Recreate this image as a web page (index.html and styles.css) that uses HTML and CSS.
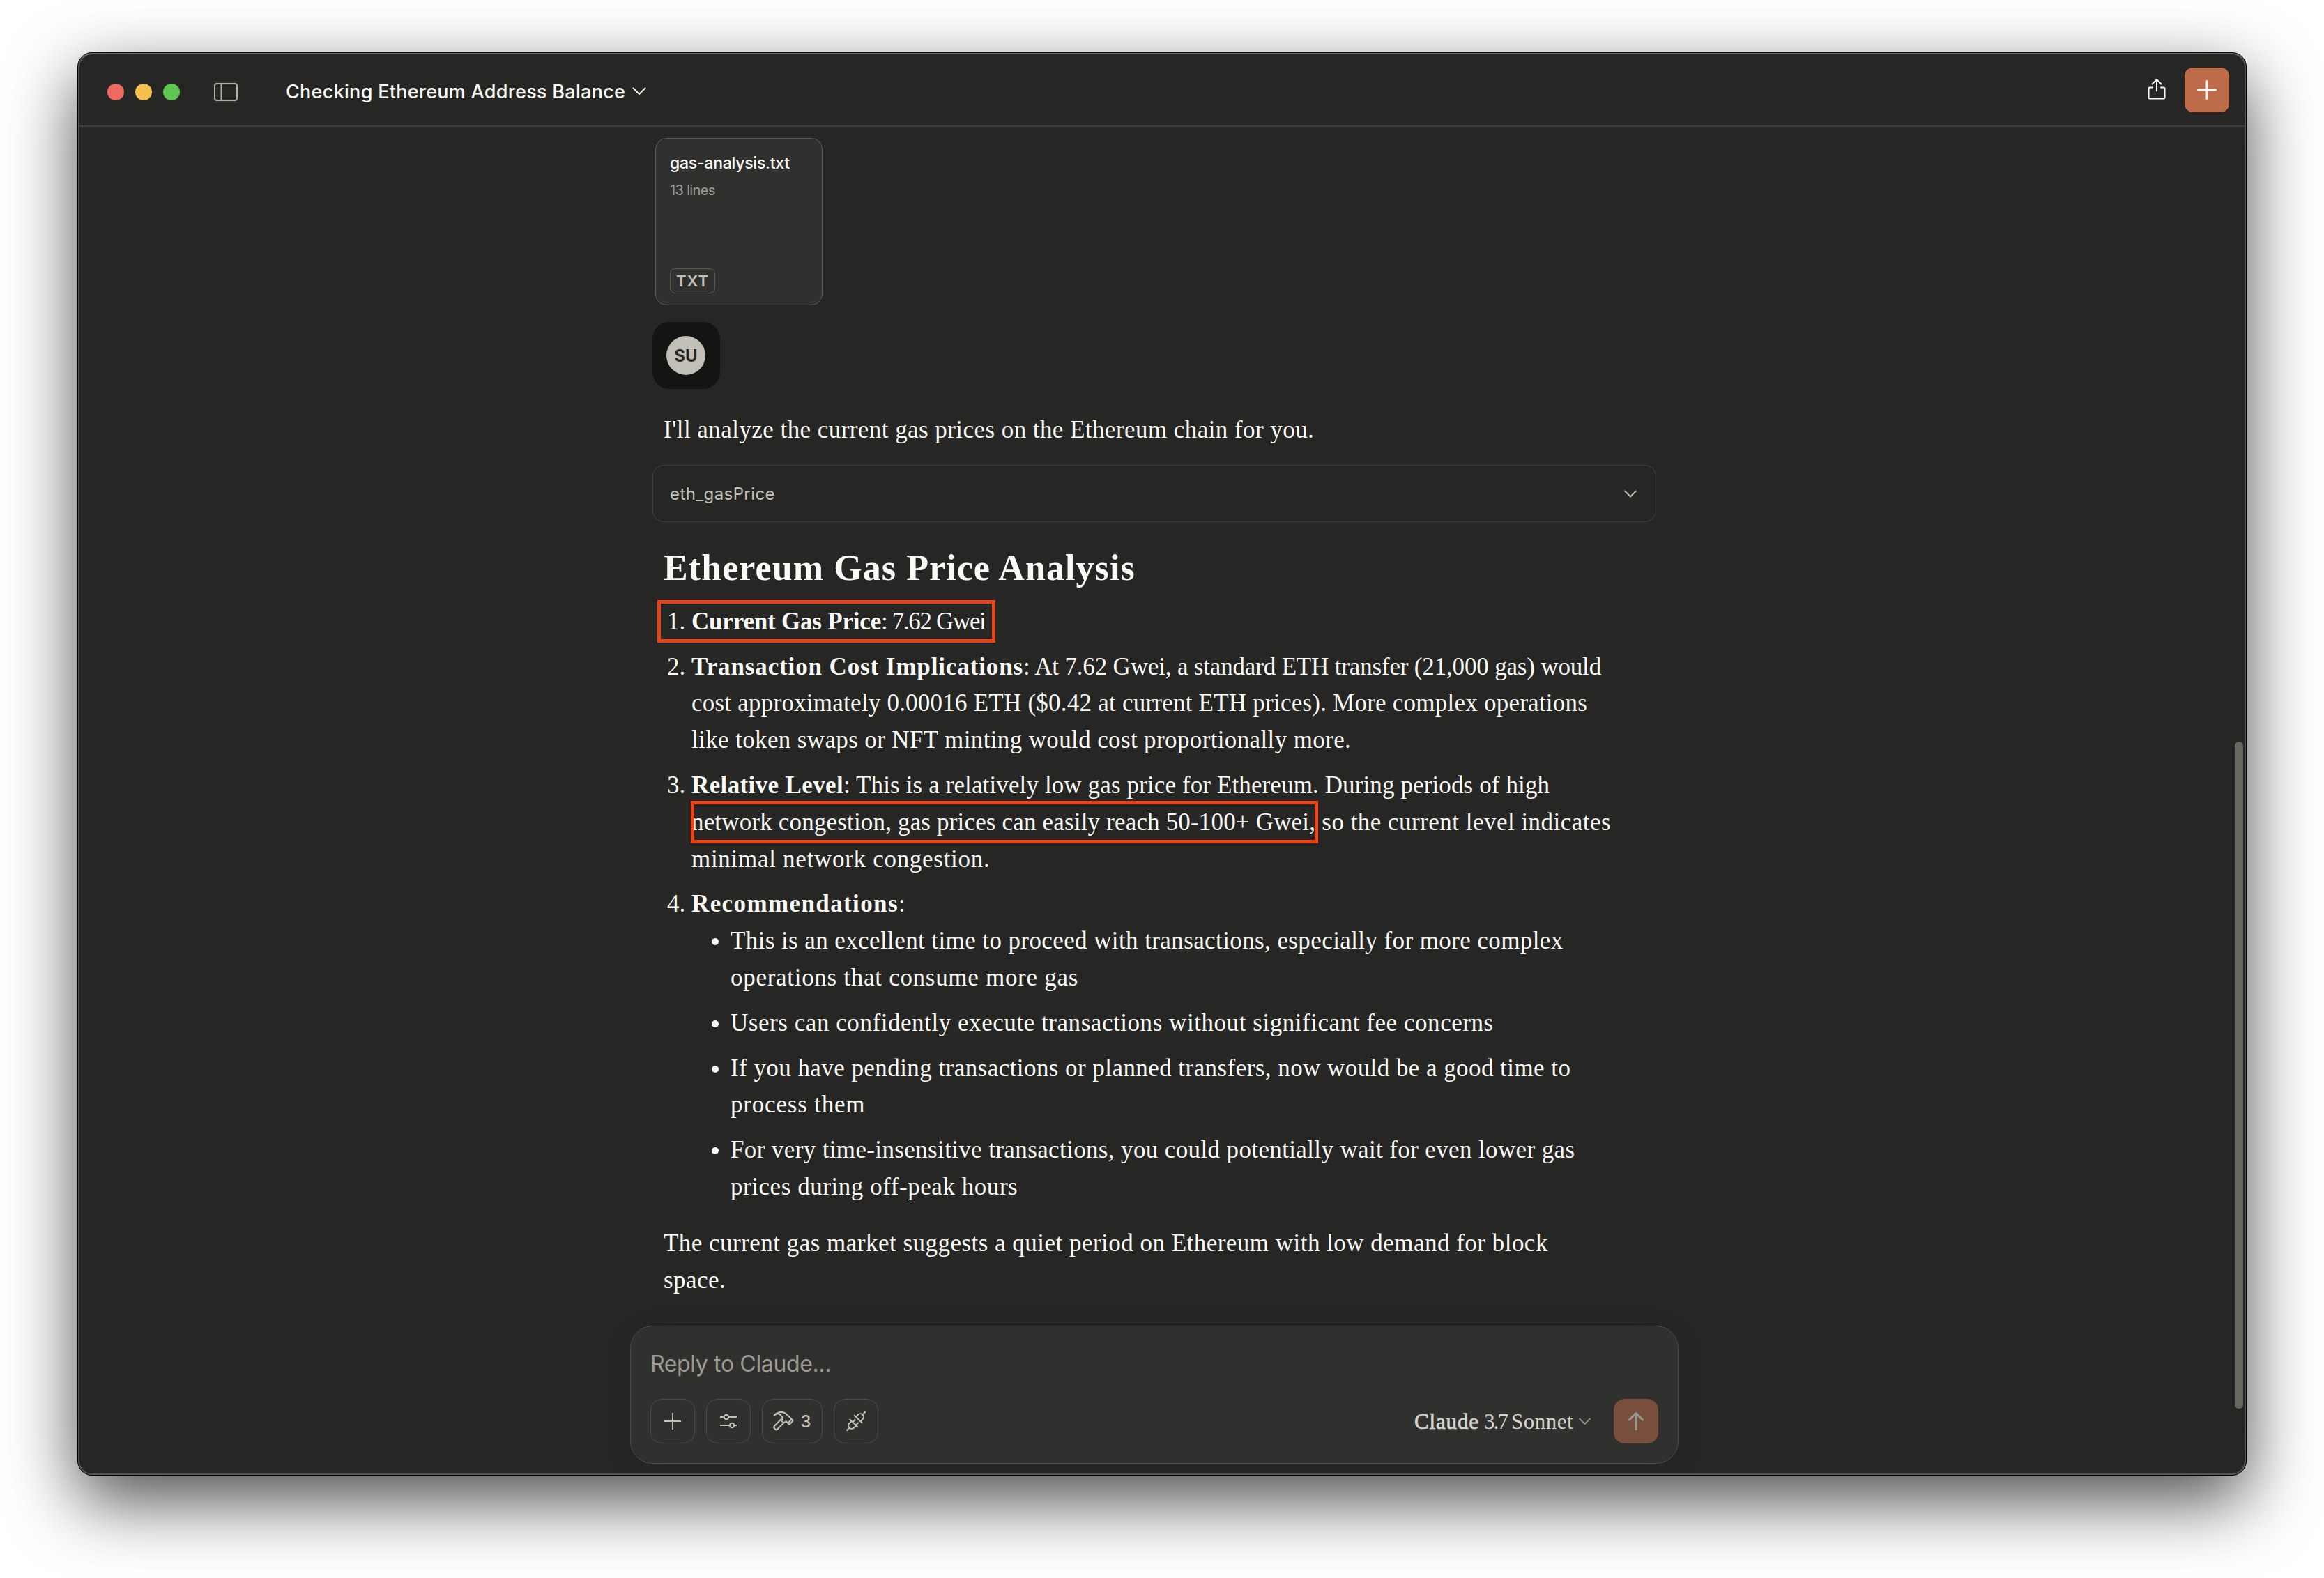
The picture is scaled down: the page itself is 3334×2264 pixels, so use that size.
FILE: index.html
```html
<!DOCTYPE html>
<html lang="en">
<head>
<meta charset="utf-8">
<title>Checking Ethereum Address Balance</title>
<link rel="stylesheet" href="styles.css">
</head>
<body>
<div class="window">
  <header class="titlebar">
    <div class="lights"><i class="red"></i><i class="yellow"></i><i class="green"></i></div>
    <svg class="icon sidebar-icon" width="34" height="28" viewBox="0 0 34 28"><rect x="1" y="2" width="32" height="24" rx="3"/><path d="M10.500 2v24"/></svg>
    <h1 class="title">Checking Ethereum Address Balance</h1>
    <svg class="icon title-chevron" width="20" height="12" viewBox="0 0 20 12"><path d="M1.500 1.500 10 10l8.500-8.500"/></svg>
    <div class="actions">
      <svg class="icon share-icon" width="26" height="32" viewBox="0 0 26 32"><path d="M7 13.500H3a1.500 1.500 0 0 0-1.500 1.500v13A1.500 1.500 0 0 0 3 29.500h20a1.500 1.500 0 0 0 1.500-1.500V15a1.500 1.500 0 0 0-1.500-1.500h-4M13 18.500V2M6.500 8.500 13 2l6.500 6.500"/></svg>
      <button class="new-chat"><svg class="icon" width="28" height="28" viewBox="0 0 28 28"><path d="M14 1.500v25M1.500 14h25"/></svg></button>
    </div>
  </header>

  <main class="content">
    <div class="column">
      <div class="file-card">
        <div class="file-name">gas-analysis.txt</div>
        <div class="file-lines">13 lines</div>
        <div class="file-type">TXT</div>
      </div>
      <div class="user-bubble"><div class="avatar">SU</div></div>

      <p class="prose intro"><span class="line ls-44">I'll analyze the current gas prices on the Ethereum chain for you.</span></p>

      <div class="tool"><span>eth_gasPrice</span>
        <svg class="icon" width="18" height="11" viewBox="0 0 18 11"><path d="M1 1.500 9 9.500l8-8"/></svg>
      </div>

      <article class="prose">
        <h2>Ethereum Gas Price Analysis</h2>
        <ol>
          <li><span class="line"><b class="b-price">Current Gas Price</b><span class="n-price">: 7.62 Gwei</span></span><i class="mark mark-price"></i></li>
          <li>
            <span class="line"><b class="b-cost">Transaction Cost Implications</b><span class="n-cost">: At 7.62 Gwei, a standard ETH transfer (21,000 gas) would</span></span>
            <span class="line ls-23">cost approximately 0.00016 ETH ($0.42 at current ETH prices). More complex operations</span>
            <span class="line ls-37">like token swaps or NFT minting would cost proportionally more.</span>
          </li>
          <li>
            <span class="line"><b class="b-level">Relative Level</b><span class="n-level">: This is a relatively low gas price for Ethereum. During periods of high</span></span>
            <span class="line"><span class="n-range">network congestion, gas prices can easily reach 50-100+ Gwei,</span><span class="ls-48"> so the current level indicates</span></span>
            <span class="line ls-71">minimal network congestion.</span>
            <i class="mark mark-range"></i>
          </li>
          <li>
            <span class="line"><b class="b-rec">Recommendations</b>:</span>
            <ul>
              <li><span class="line ls-40">This is an excellent time to proceed with transactions, especially for more complex</span><span class="line ls-71">operations that consume more gas</span></li>
              <li><span class="line ls-55">Users can confidently execute transactions without significant fee concerns</span></li>
              <li><span class="line ls-44">If you have pending transactions or planned transfers, now would be a good time to</span><span class="line ls-80">process them</span></li>
              <li><span class="line ls-37">For very time-insensitive transactions, you could potentially wait for even lower gas</span><span class="line ls-55">prices during off-peak hours</span></li>
            </ul>
          </li>
        </ol>
        <p class="outro"><span class="line ls-48">The current gas market suggests a quiet period on Ethereum with low demand for block</span><span class="line ls-44">space.</span></p>
      </article>

      <div class="composer">
        <div class="placeholder">Reply to Claude...</div>
        <div class="controls">
          <button class="tool-btn"><svg class="icon" width="24" height="24" viewBox="0 0 24 24"><path d="M12 .5v23M.5 12h23"/></svg></button>
          <button class="tool-btn"><svg class="icon" width="24" height="22" viewBox="0 0 24 22"><path d="M.5 5h5M12.500 5h11M.5 17H13M20 17h3.500"/><circle cx="9" cy="5" r="3.300"/><circle cx="17" cy="17" r="3.300"/></svg></button>
          <button class="tool-btn hammer"><svg class="icon" width="30" height="28" viewBox="0 0 30 28"><path d="M1.500 6C5 1 13-.8 18 2.800L28 12.300a1.200 1.200 0 0 1 0 1.700L24.300 18a1.200 1.200 0 0 1-1.800 0L18.800 14.300 15.500 16.200M1.500 6C4.500 3.200 8 2.800 10 4.500L14 9 13.500 12M10.500 12.200 1.500 21.500a1.400 1.400 0 0 0 0 2L3.700 26a1.400 1.400 0 0 0 2 0L15.500 16.200M10 12.500 12.500 10.500M10.500 12.200 15.500 16.200M26.500 11 22.300 16"/></svg><span>3</span></button>
          <button class="tool-btn"><svg class="icon" width="28" height="28" viewBox="0 0 28 28"><path d="M1 27l3.500-3.500M27.300.7 24 4M11.700 5.700l10.800 10.600M5.300 11.700l11 10.600M14 7.500l3-3a4.500 4.500 0 0 1 6.500 6.500l-3 3.500M7.500 14l-3 3a4.500 4.500 0 0 0 6.500 6.500l3-3M9.500 15.500l3-3.500M14 19.500l3-3"/></svg></button>
          <div class="model"><b>Claude</b><span class="version">3.7</span><span class="family">Sonnet</span>
            <svg class="icon" width="17" height="11" viewBox="0 0 17 11"><path d="M1 1.500 8.500 9 16 1.500"/></svg>
          </div>
          <button class="send"><svg class="icon" width="24" height="28" viewBox="0 0 24 28"><path d="M12 26V2.500M2.500 12 12 2.500l9.500 9.500"/></svg></button>
        </div>
      </div>
    </div>
    <div class="scrollbar"><i class="thumb"></i></div>
  </main>
</div>
</body>
</html>
```
FILE: styles.css
```css
* { box-sizing: border-box; margin: 0; padding: 0; }

body {
  width: 3334px;
  height: 2264px;
  padding: 75px 111px;
  background: #fff;
  color: #faf9f5;
  font-family: Inter, "Liberation Sans", sans-serif;
  overflow: hidden;
}

button { border: 0; background: none; color: inherit; font: inherit; }
.icon { display: block; flex: none; fill: none; stroke: currentColor; stroke-width: 2; stroke-linecap: round; stroke-linejoin: round; }

/* Window frame */
.window {
  position: relative;
  display: flex;
  flex-direction: column;
  width: 3112px;
  height: 2042px;
  border: 1px solid #000;
  border-radius: 21px;
  background: #262624;
  box-shadow: 0 36px 100px rgba(0, 0, 0, .7);
  overflow: hidden;
}
.window::after {
  content: "";
  position: absolute;
  inset: 0;
  border: 2px solid #555553;
  border-top-color: #6f6e69;
  border-radius: 20px;
  pointer-events: none;
}

/* Title bar */
.titlebar {
  display: flex;
  align-items: center;
  flex: none;
  height: 106px;
  padding: 6px 24px 0 42px;
  border-bottom: 2px solid #3e3e3b;
}
.lights { display: flex; gap: 16px; padding-top: 2px; }
.lights i { width: 24px; height: 24px; border-radius: 50%; }
.red { background: #ed6a5e; }
.yellow { background: #f4bf4f; }
.green { background: #61c554; }
.sidebar-icon { margin: 2px 0 0 49px; color: #b0aea5; }
.title { margin: 1px 0 0 69px; font-size: 27px; font-weight: 450; line-height: 40px; letter-spacing: .29px; white-space: nowrap; }
.title-chevron { margin: 0 0 0 10px; }
.actions { display: flex; align-items: center; gap: 27px; height: 64px; margin: -4px 0 0 auto; }
.share-icon { margin-bottom: 2px; }
.new-chat { display: grid; place-items: center; width: 64px; height: 64px; border-radius: 12px; background: #bd6b48; }
.new-chat .icon { stroke-width: 3; }

/* Conversation */
.content { display: flex; flex: 1; min-height: 0; }
.column { display: flex; flex-direction: column; align-items: flex-start; width: 1504px; margin: 0 auto; padding: 16px 0 16px; }

.file-card {
  display: flex;
  flex-direction: column;
  align-items: flex-start;
  width: 240px;
  height: 240px;
  margin-left: 36px;
  padding: 21px 20px 16px;
  border: 1px solid #5c5b57;
  border-radius: 16px;
  background: #30302e;
}
.file-name { font-size: 23px; font-weight: 450; line-height: 28px; letter-spacing: -.25px; }
.file-lines { margin-top: 13px; color: #9c9a92; font-size: 20px; line-height: 24px; letter-spacing: -.65px; }
.file-type { margin-top: auto; width: 65px; height: 36px; border: 1px solid #5c5b57; border-radius: 8px; color: #c2c0b6; font-size: 22px; font-weight: 600; line-height: 35px; letter-spacing: 1px; text-align: center; }

.user-bubble { width: 97px; height: 96px; margin: 24px 0 0 32px; padding: 20px; border-radius: 24px; background: #141413; }
.avatar { width: 56px; height: 56px; border-radius: 50%; background: #c2c0b6; color: #262624; font-size: 24px; font-weight: 700; line-height: 57px; text-align: center; }

.prose { margin-left: 48px; font: 35px/52.8px "Liberation Serif", serif; }
.line { display: block; white-space: pre; }
.intro { margin-top: 33px; }

.tool {
  display: flex;
  align-items: center;
  justify-content: space-between;
  width: 1440px;
  height: 82px;
  margin: 23px 0 0 32px;
  padding: 1px 27px 0 24px;
  border: 1px solid #41413e;
  border-radius: 16px;
  color: #c2c0b6;
  font-size: 24px;
  letter-spacing: .4px;
}

h2 { margin-top: 36px; font-size: 52px; line-height: 60px; letter-spacing: 1.08px; white-space: nowrap; }
ol { margin-top: 21px; padding-left: 40px; }
li { position: relative; }
li + li { margin-top: 12px; }
ul { padding-left: 56px; list-style: disc; }
.outro { margin-top: 28px; }

/* Tracking of the individual text runs */
.ls-23 { letter-spacing: .23px; }
.ls-37 { letter-spacing: .37px; }
.ls-40 { letter-spacing: .4px; }
.ls-44 { letter-spacing: .44px; }
.ls-48 { letter-spacing: .48px; }
.ls-55 { letter-spacing: .55px; }
.ls-71 { letter-spacing: .71px; }
.ls-80 { letter-spacing: .8px; }
.b-price { letter-spacing: -.2px; }
.n-price { letter-spacing: -1.35px; }
.b-cost { letter-spacing: .88px; }
.n-cost { letter-spacing: -.17px; }
.b-level { letter-spacing: .37px; }
.n-level { letter-spacing: .12px; }
.n-range { letter-spacing: .17px; }
.b-rec { letter-spacing: 1.39px; }

/* Red annotation frames over the text */
.mark { position: absolute; border: 5px solid #ea4219; }
.mark-price { left: -49px; top: -5px; width: 485px; height: 61px; }
.mark-range { left: -1px; top: 48px; width: 900px; height: 61px; }

/* Composer */
.composer {
  display: flex;
  flex-direction: column;
  width: 1504px;
  height: 198px;
  margin-top: auto;
  padding: 33px 28px 28px;
  border: 1px solid #4a4a47;
  border-radius: 32px;
  background: #30302e;
  box-shadow: 0 8px 40px rgba(0, 0, 0, .09);
}
.placeholder { color: #9c9a92; font-size: 32px; line-height: 42px; letter-spacing: -.36px; }
.controls { display: flex; align-items: center; gap: 16px; height: 64px; margin: auto 0 0 -4px; padding-left: 4px; color: #c2c0b6; }
.tool-btn { display: flex; align-items: center; justify-content: center; width: 64px; height: 64px; border: 1px solid #4a4a47; border-radius: 16px; }
.hammer { gap: 9px; width: 87px; font-size: 24px; font-weight: 500; }
.model { display: flex; align-items: center; margin-left: auto; padding-top: 1px; color: #d6d4cc; font: 31px/40px "Liberation Serif", serif; }
.model b { font-weight: 400; letter-spacing: .86px; -webkit-text-stroke: .7px currentColor; }
.version { margin-left: 7px; letter-spacing: -1.9px; }
.family { margin-left: 6px; letter-spacing: .48px; }
.model .icon { margin: 0 17px 0 8px; color: #8f8d85; }
.send { display: grid; place-items: center; width: 64px; height: 64px; border-radius: 16px; background: #774f3c; color: #999791; }
.send .icon { stroke-width: 3; }

.scrollbar { flex: none; width: 22px; padding: 882px 4px 0 6px; }
.thumb { display: block; height: 957px; border-radius: 6px; background: #67665f; }
```
